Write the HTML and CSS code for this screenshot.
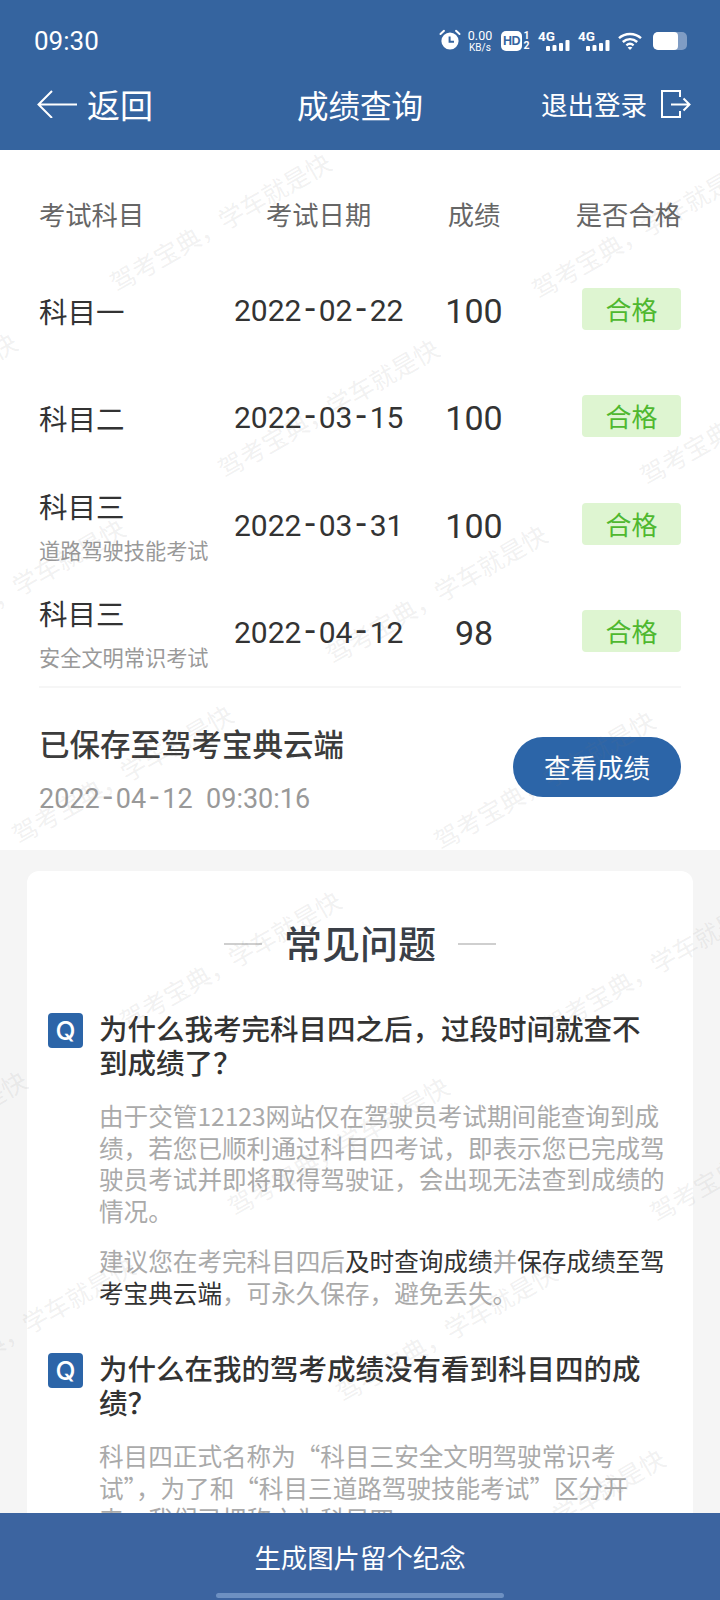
FILE: index.html
```html
<!DOCTYPE html>
<html lang="zh-CN">
<head>
<meta charset="utf-8">
<title>成绩查询</title>
<link rel="stylesheet" href="styles.css">
</head>
<body>
<div class="page">
  <header class="top">
    <div class="status">
      <span class="time">09:30</span>
      <div class="status-icons">
        <svg class="ic-alarm" width="22" height="22" viewBox="0 0 22 22"><circle cx="11" cy="12" r="8.6" fill="#fff"/><path d="M10.6 7.5v5.2h4.4" fill="none" stroke="#35649f" stroke-width="2"/><path d="M1.5 5 5 1.8M20.5 5 17 1.8" stroke="#fff" stroke-width="2" stroke-linecap="round"/></svg>
        <div class="speed"><span class="speed-a">0.00</span><span class="speed-b">KB/s</span></div>
        <span class="hd">HD</span>
        <div class="sim"><span>1</span><span>2</span></div>
        <div class="net">
          <span class="net-label">4G</span>
          <svg class="net-bars" width="24" height="11" viewBox="0 0 24 11"><rect x="0" y="6" width="4" height="5" rx="1" fill="#fff"/><rect x="6.500" y="5" width="4" height="6" rx="1" fill="#fff"/><rect x="13" y="3" width="4" height="8" rx="1" fill="#fff"/><rect x="19.500" y="0" width="4" height="11" rx="1" fill="#fff"/></svg>
        </div>
        <div class="net net-2">
          <span class="net-label">4G</span>
          <svg class="net-bars" width="24" height="11" viewBox="0 0 24 11"><rect x="0" y="6" width="4" height="5" rx="1" fill="#fff"/><rect x="6.500" y="5" width="4" height="6" rx="1" fill="#fff"/><rect x="13" y="3" width="4" height="8" rx="1" fill="#fff"/><rect x="19.500" y="0" width="4" height="11" rx="1" fill="#fff"/></svg>
        </div>
        <svg class="ic-wifi" width="24" height="18" viewBox="0 0 24 18"><g fill="none" stroke="#fff" stroke-width="2.400"><path d="M1 6.200C7 .6 17 .6 23 6.200"/><path d="M4.800 10C9 6.200 15 6.200 19.200 10"/><path d="M8.400 13.400c2.100-1.800 5.100-1.800 7.200 0"/></g><path d="M12 18l-2.400-2.600c1.400-1 3.400-1 4.800 0z" fill="#fff"/></svg>
        <div class="battery"><span class="battery-fill"></span></div>
      </div>
    </div>
    <nav class="nav">
      <div class="nav-left">
        <svg class="ic-back" width="40" height="28" viewBox="0 0 40 28"><path d="M40 14.500H2M15 1 1.500 14.500 15 28" fill="none" stroke="#fff" stroke-width="2"/></svg>
        <span class="back-label">返回</span>
      </div>
      <div class="nav-title">成绩查询</div>
      <div class="nav-right">
        <span class="logout">退出登录</span>
        <svg class="ic-logout" width="30" height="28" viewBox="0 0 30 28"><path d="M19 7V1H1v26h18v-6M10 14.500h18.500M22.500 8.500l6 6-6 6" fill="none" stroke="#fff" stroke-width="2"/></svg>
      </div>
    </nav>
  </header>

  <main class="content">
    <section class="scores">
      <div class="table">
        <div class="thead">
          <span>考试科目</span>
          <span class="th-date">考试日期</span>
          <span class="th-score">成绩</span>
          <span class="th-pass">是否合格</span>
        </div>
        <div class="row">
          <div class="subject">科目一</div>
          <div class="date">2022<span class="hy">-</span>02<span class="hy">-</span>22</div>
          <div class="score">100</div>
          <div class="cell-pass"><span class="badge">合格</span></div>
        </div>
        <div class="row">
          <div class="subject">科目二</div>
          <div class="date">2022<span class="hy">-</span>03<span class="hy">-</span>15</div>
          <div class="score">100</div>
          <div class="cell-pass"><span class="badge">合格</span></div>
        </div>
        <div class="row">
          <div class="subject">科目三<small class="sub">道路驾驶技能考试</small></div>
          <div class="date">2022<span class="hy">-</span>03<span class="hy">-</span>31</div>
          <div class="score">100</div>
          <div class="cell-pass"><span class="badge">合格</span></div>
        </div>
        <div class="row">
          <div class="subject">科目三<small class="sub">安全文明常识考试</small></div>
          <div class="date">2022<span class="hy">-</span>04<span class="hy">-</span>12</div>
          <div class="score">98</div>
          <div class="cell-pass"><span class="badge">合格</span></div>
        </div>
      </div>
      <div class="saved">
        <div class="saved-info">
          <div class="saved-title">已保存至驾考宝典云端</div>
          <div class="saved-time">2022<span class="hy-sm">-</span>04<span class="hy-sm">-</span>12&nbsp;&nbsp;09:30:16</div>
        </div>
        <button class="view-btn">查看成绩</button>
      </div>
    </section>

    <section class="faq">
      <h2 class="faq-title"><span class="rule"></span>常见问题<span class="rule"></span></h2>
      <article class="qa">
        <div class="q"><span class="q-icon">Q</span><h3 class="q-text">为什么我考完科目四之后，过段时间就查不到成绩了？</h3></div>
        <p class="a">由于交管12123网站仅在驾驶员考试期间能查询到成绩，若您已顺利通过科目四考试，即表示您已完成驾驶员考试并即将取得驾驶证，会出现无法查到成绩的情况。</p>
        <p class="a a-next">建议您在考完科目四后<b class="em">及时查询成绩</b>并<b class="em">保存成绩至驾考宝典云端</b>，可永久保存，避免丢失。</p>
      </article>
      <article class="qa qa-next">
        <div class="q"><span class="q-icon">Q</span><h3 class="q-text">为什么在我的驾考成绩没有看到科目四的成绩？</h3></div>
        <p class="a">科目四正式名称为“科目三安全文明驾驶常识考试”，为了和“科目三道路驾驶技能考试”区分开来，我们已把称之为科目四。</p>
      </article>
    </section>
  </main>

  <div class="marks" aria-hidden="true">
    <span class="mark m1">驾考宝典，学车就是快</span>
    <span class="mark m2">驾考宝典，学车就是快</span>
    <span class="mark m3">驾考宝典，学车就是快</span>
    <span class="mark m4">驾考宝典，学车就是快</span>
    <span class="mark m5">驾考宝典，学车就是快</span>
    <span class="mark m6">驾考宝典，学车就是快</span>
    <span class="mark m7">驾考宝典，学车就是快</span>
    <span class="mark m8">驾考宝典，学车就是快</span>
    <span class="mark m9">驾考宝典，学车就是快</span>
    <span class="mark m10">驾考宝典，学车就是快</span>
    <span class="mark m11">驾考宝典，学车就是快</span>
    <span class="mark m12">驾考宝典，学车就是快</span>
    <span class="mark m13">驾考宝典，学车就是快</span>
    <span class="mark m14">驾考宝典，学车就是快</span>
    <span class="mark m15">驾考宝典，学车就是快</span>
    <span class="mark m16">驾考宝典，学车就是快</span>
    <span class="mark m17">驾考宝典，学车就是快</span>
  </div>

  <footer class="bottom">
    <div class="bottom-label">生成图片留个纪念</div>
    <div class="home-bar"></div>
  </footer>
</div>
</body>
</html>
```

FILE: styles.css
```css
* { box-sizing: border-box; }
html, body { margin: 0; padding: 0; }
body {
  font-family: "Noto Sans CJK SC", "Noto Sans", sans-serif;
  background: #f5f5f5;
  color: #333;
}
.page {
  position: relative;
  width: 720px;
  height: 1600px;
  overflow: hidden;
  display: flex;
  flex-direction: column;
}

/* header */
.top {
  position: relative;
  z-index: 2;
  height: 150px;
  flex: none;
  background: #35649f;
  color: #fff;
  padding-top: 11px;
}
.status {
  height: 60px;
  display: flex;
  align-items: center;
  justify-content: space-between;
  padding: 0 33px 0 34px;
}
.time { font: 400 26px/1 Roboto, sans-serif; }
.status-icons { display: flex; align-items: center; }
.ic-alarm { display: block; margin-top: -2px; }
.speed {
  display: flex;
  flex-direction: column;
  align-items: center;
  margin-left: 6px;
  width: 26px;
  font-family: Roboto, sans-serif;
}
.speed-a { font-size: 12.500px; line-height: 12px; }
.speed-b { font-size: 10px; line-height: 11px; }
.hd {
  margin-left: 8px;
  width: 21px;
  height: 20px;
  border-radius: 5px;
  background: #fff;
  color: #35649f;
  font: 700 12.500px/20px "Liberation Sans", sans-serif;
  text-align: center;
  letter-spacing: -0.5px;
}
.sim {
  display: flex;
  flex-direction: column;
  align-items: center;
  margin-left: 1px;
  width: 7px;
  font: 700 10.500px/10px Roboto, sans-serif;
}
.net {
  position: relative;
  width: 33px;
  height: 20px;
  margin-left: 8px;
}
.net-2 { margin-left: 7px; }
.net-label {
  position: absolute;
  left: 0;
  top: -1px;
  font: 700 13.500px/12px Roboto, sans-serif;
}
.net-bars { position: absolute; left: 8px; top: 9px; display: block; }
.ic-wifi { display: block; margin-left: 7px; }
.battery {
  margin-left: 11px;
  width: 34px;
  height: 18px;
  border-radius: 5px;
  background: #7f9cc4;
  overflow: hidden;
}
.battery-fill {
  display: block;
  width: 25px;
  height: 18px;
  background: #fff;
  border-radius: 4px;
}
.nav {
  height: 66px;
  display: grid;
  grid-template-columns: 1fr auto 1fr;
  align-items: center;
  padding: 0 29px;
}
.nav-left { display: flex; align-items: center; padding-left: 8px; }
.ic-back { display: block; margin-top: -1px; }
.back-label { margin-left: 10px; font-size: 33px; line-height: 44px; }
.nav-title { font-size: 31.500px; line-height: 44px; }
.nav-right { display: flex; align-items: center; justify-content: flex-end; }
.logout { font-size: 26.500px; line-height: 40px; }
.ic-logout { display: block; margin-left: 14px; margin-top: -1px; }

/* scores */
.content { flex: 1; min-height: 0; overflow: hidden; }
.scores { background: #fff; height: 700px; padding: 0 39px; }
.thead, .row {
  display: grid;
  grid-template-columns: 195px 190px 100px 1fr;
  align-items: center;
}
.thead {
  height: 107.300px;
  padding-top: 20px;
  font-size: 26.300px;
  line-height: 36px;
  color: #666;
}
.th-date { padding-left: 32px; }
.th-score { text-align: center; }
.th-pass { text-align: right; }
.row { height: 107.330px; }
.subject { font-size: 28.500px; line-height: 40px; color: #333; }
.sub {
  display: block;
  margin-top: 9px;
  font-size: 21.200px;
  line-height: 30px;
  color: #999;
}
.date { font: 400 30px/40px Roboto, sans-serif; color: #333; }
.hy {
  padding: 0 3.500px;
  font-size: 37px;
  line-height: 0;
}
.score { font: 400 34px/40px Roboto, sans-serif; text-align: center; color: #333; }
.cell-pass { display: flex; justify-content: flex-end; }
.badge {
  width: 99px;
  height: 42px;
  margin-top: -4px;
  border-radius: 4px;
  background: #def5d1;
  color: #4fb82f;
  font-size: 26px;
  line-height: 42px;
  text-align: center;
}
.saved {
  height: 164px;
  margin-top: -1px;
  border-top: 2px solid #f6f6f6;
  display: flex;
  justify-content: space-between;
  align-items: flex-start;
  padding-top: 35px;
}
.saved-title { font-size: 30.500px; font-weight: 500; line-height: 40px; color: #3c3c3c; }
.saved-time { margin-top: 18px; font: 400 27px/36px Roboto, sans-serif; color: #999; }
.hy-sm {
  padding: 0 3.500px;
  font-size: 33px;
  line-height: 0;
}
.view-btn {
  width: 168px;
  height: 60px;
  margin-top: 14px;
  border: 0;
  border-radius: 30px;
  background: #2c65a8;
  color: #fff;
  font-family: inherit;
  font-size: 26.500px;
}

/* faq */
.faq {
  margin: 21px 27px 0;
  padding: 46px 21px 0;
  background: #fff;
  border-radius: 12px 12px 0 0;
  height: 700px;
}
.faq-title {
  margin: 0 0 44px;
  display: flex;
  justify-content: center;
  align-items: center;
  gap: 22px;
  font-size: 38px;
  font-weight: 500;
  line-height: 50px;
  color: #3a3f47;
}
.rule { width: 38px; height: 2px; background: #cfcfcf; margin-top: 4px; }
.q { display: flex; align-items: flex-start; gap: 16px; }
.q-icon {
  flex: none;
  width: 35px;
  height: 35px;
  margin-top: 2px;
  border-radius: 4px;
  background: #2c65a8;
  color: #fff;
  font: 500 26px/35px Inter, sans-serif;
  text-align: center;
}
.q-text {
  margin: 0;
  max-width: 560px;
  font-size: 28.500px;
  font-weight: 500;
  line-height: 34px;
  color: #333;
}
.a {
  margin: 21px 0 0 51px;
  width: 573px;
  font-size: 24.600px;
  line-height: 31.500px;
  color: #aaa;
}
.a-next { margin-top: 19px; }
.em { font-weight: 400; color: #333; }
.qa-next { margin-top: 43px; }

/* watermark */
.marks { position: absolute; inset: 0; z-index: 1; pointer-events: none; }
.mark {
  position: absolute;
  font-size: 25px;
  line-height: 25px;
  white-space: nowrap;
  color: rgba(120, 120, 120, 0.11);
  transform-origin: 0 100%;
  transform: rotate(-30deg);
}
.m1 { left: 118px; top: 270px; }
.m2 { left: 540px; top: 277px; }
.m3 { left: 226px; top: 456px; }
.m4 { left: 648px; top: 463px; }
.m5 { left: -196px; top: 450px; }
.m6 { left: 334px; top: 642px; }
.m7 { left: -88px; top: 636px; }
.m8 { left: 442px; top: 828px; }
.m9 { left: 20px; top: 822px; }
.m10 { left: 128px; top: 1008px; }
.m11 { left: 550px; top: 1014px; }
.m12 { left: 236px; top: 1194px; }
.m13 { left: 658px; top: 1200px; }
.m14 { left: -186px; top: 1188px; }
.m15 { left: 344px; top: 1380px; }
.m16 { left: -78px; top: 1374px; }
.m17 { left: 452px; top: 1566px; }

/* bottom bar */
.bottom {
  position: relative;
  z-index: 2;
  flex: none;
  height: 87px;
  background: #3c64a0;
  color: #fff;
  padding-top: 24px;
}
.bottom-label { font-size: 26.400px; line-height: 40px; text-align: center; }
.home-bar {
  width: 288px;
  height: 5px;
  margin: 16px auto 0;
  border-radius: 3px;
  background: #6d90c2;
}
```
